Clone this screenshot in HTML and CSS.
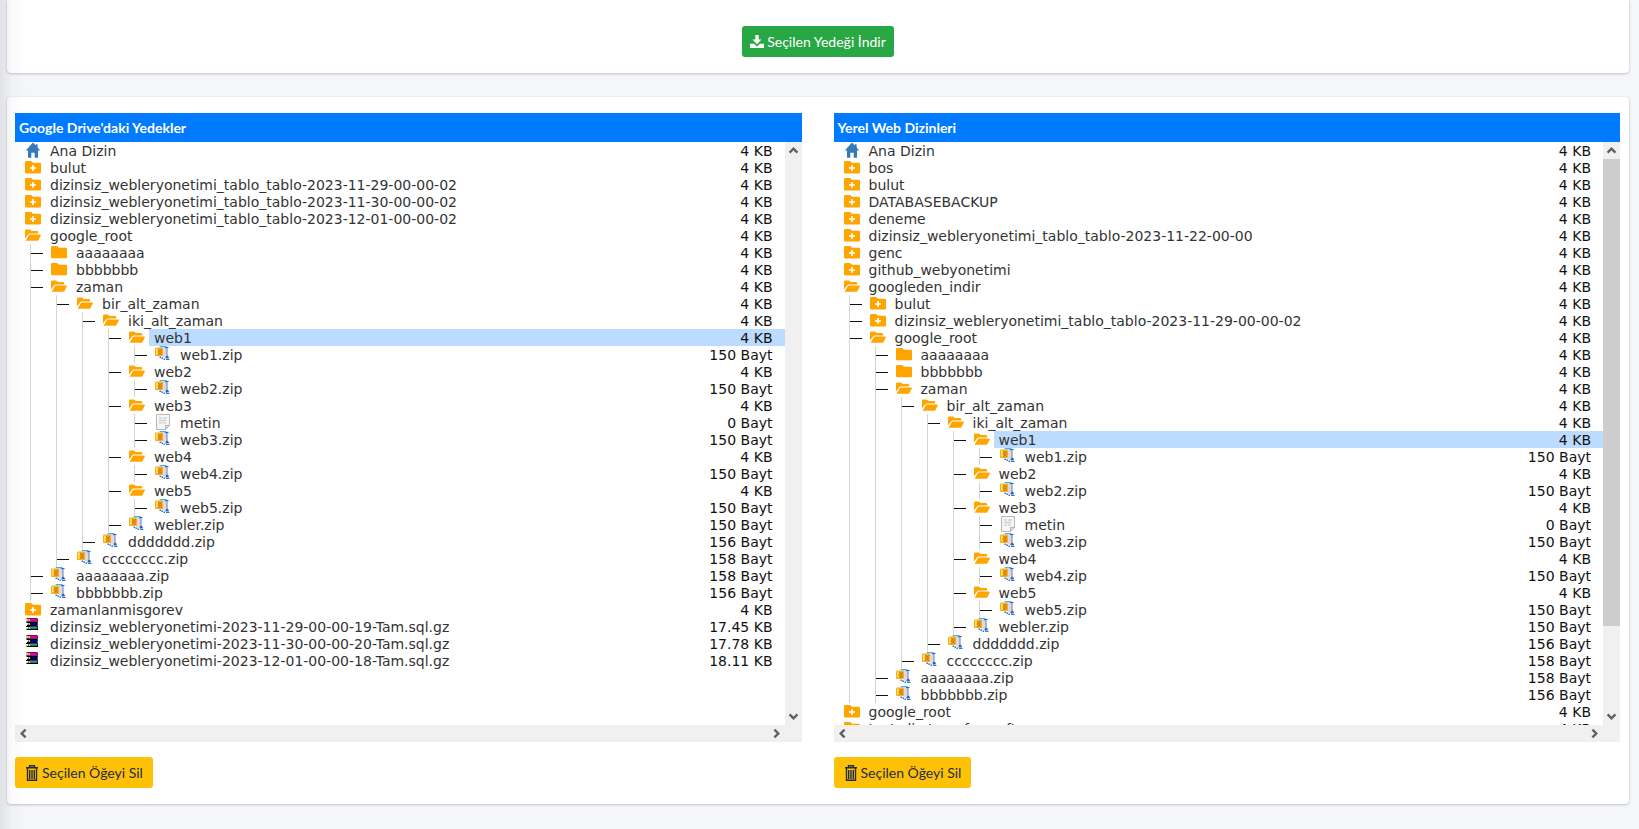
FILE: index.html
```html
<!DOCTYPE html>
<html lang="tr">
<head>
<meta charset="utf-8">
<title>Yedekler</title>
<link rel="stylesheet" href="styles.css">
</head>
<body>
<svg class="sprite" aria-hidden="true">
  <symbol id="home" viewBox="0 0 16 16"><path fill="#337ab7" d="M8 0.5 0.8 8.6H3V15.8H6.3V10.8H9.7V15.8H13V8.6H15.2L12.6 5.6V2.3H10.8V3.5Z"/></symbol>
  <symbol id="plus" viewBox="0 0 16 16"><path fill="#ffa500" d="M1.2 2H6.2L8 3.8H14.8Q16 3.8 16 5V13.3Q16 14.5 14.8 14.5H1.2Q0 14.5 0 13.3V3.2Q0 2 1.2 2Z"/><path fill="#fff" d="M7.2 6H8.8V8.2H11V9.8H8.8V12H7.2V9.8H5V8.2H7.2Z"/></symbol>
  <symbol id="closed" viewBox="0 0 16 16"><path fill="#ffa500" d="M1.2 2H6.2L8 3.8H14.8Q16 3.8 16 5V13.3Q16 14.3 14.8 14.3H1.2Q0 14.3 0 13.3V3.2Q0 2 1.2 2Z"/></symbol>
  <symbol id="open" viewBox="0 0 16 16"><path fill="#ffa500" d="M0 11.5V3.7Q0 2.5 1.2 2.5H5L6.8 4.1H12Q13.2 4.1 13.2 5.3V6.5H5Q3.6 6.5 2.9 7.7ZM.6 13.8 3.8 8.2Q4.1 7.5 5 7.5H15.2Q16.2 7.5 15.8 8.5L13.5 12.9Q13 13.8 12 13.8Z"/></symbol>
  <symbol id="zip" viewBox="0 0 16 16"><path fill="#3db4e8" d="M4 1.3 5.2 0H11.8L11 1.5Z"/><path fill="#e9d5d2" d="M7.5 2H11V10L9.5 11.5H7.5Z"/><path fill="#2864c0" d="M10.2 1H13.5V2H12.4V9.5L13.8 11V12.5L10.5 12.4V11L11.2 10V2.2H10.2Z"/><path fill="#a9c8ec" d="M11.3 2H12V10H11.3Z"/><rect y="1.5" width="8" height="8.6" rx="1.2" fill="#f9ae20"/><path fill="#ffe04a" d="M1 2.5H3V8.5H1Z"/><path fill="none" stroke="#b8681a" stroke-width=".9" d="M3 3.5 5 4.5 7 3.5M2.5 6H7M3 8.5 5 7.5 7 8.5"/><path fill="#3579cf" d="M4.5 10.4H6V11.5H8V13H6.5V12H4.5ZM8.5 12.5H10V14H8.5ZM11 13H14.5V14H11Z"/></symbol>
  <symbol id="text" viewBox="0 0 16 16"><path fill="#f6f6f6" stroke="#b8b8b8" d="M1.5 .5H14.5V11L10.5 15.5H1.5Z"/><path fill="#ddd" stroke="#aaa" stroke-width=".8" d="M10.5 15.3V11.5H14.3Z"/><path stroke="#d0d2d6" stroke-width="1.4" d="M4 4H7M8 4H12M4 6.5H11M4 9H7M8 9H11"/></symbol>
  <symbol id="rar" viewBox="0 0 16 16"><path fill="#8b0038" d="M2 0H12.5V1H13V3.5H2L1 2.5V1Z"/><path fill="#f0e" d="M3 1.2H12V2.6H3Z"/><path d="M1 3.5H13V4.4H1ZM2 4.4H12.5V8H2ZM1 8H13V12H2L1 11Z"/><path fill="#000090" d="M4 5H12.5V7.2H4Z"/><path fill="#fff" d="M1 1.2H3.5V2.8H1ZM1 5H3.5V6.8H1ZM1 9H3.5V10.7H1ZM5 8.8H12.5V9.6H5Z"/><path fill="#078a70" d="M5 9.6H12V11H5Z"/><path fill="#dfdc18" d="M4 1H5V3H4ZM4 5H5V7H4ZM4 9H5V11H4Z"/></symbol>
  <symbol id="trash" viewBox="0 0 14 16"><path fill="none" stroke="currentColor" stroke-width="1.4" d="M4.5 2.5V.8H9.5V2.5M1 2.8H13M2.5 3V15.3H11.5V3M4.7 5V14M7 5V14M9.3 5V14"/></symbol>
  <symbol id="down" viewBox="0 0 14 14"><path fill="currentColor" d="M5.3 0H8.7V4.5H11.5L7 9.3 2.5 4.5H5.3ZM0 8.8H4L7 11.4 10 8.8H14V13H0Z"/></symbol>
  <symbol id="chevron" viewBox="0 0 17 17"><path fill="none" stroke="#606060" stroke-width="2.4" d="M4.6 10.6 8.5 6.7 12.4 10.6"/></symbol>
</svg>
<main class="page">
  <section class="card card-download">
    <button class="btn btn-success" type="button"><svg class="btn-icon"><use href="#down"/></svg>Seçilen Yedeği İndir</button>
  </section>
  <section class="card card-trees">
    <div class="panel">
      <h2 class="title">Google Drive'daki Yedekler</h2>
      <div class="scroller">
        <div class="view">
<ul class="tree">
<li><div class="row"><svg><use href="#home"/></svg><a href="#" class="item">Ana Dizin<span>4 KB</span></a></div></li>
<li><div class="row"><svg><use href="#plus"/></svg><a href="#" class="item">bulut<span>4 KB</span></a></div></li>
<li><div class="row"><svg><use href="#plus"/></svg><a href="#" class="item">dizinsiz_webleryonetimi_tablo_tablo-2023-11-29-00-00-02<span>4 KB</span></a></div></li>
<li><div class="row"><svg><use href="#plus"/></svg><a href="#" class="item">dizinsiz_webleryonetimi_tablo_tablo-2023-11-30-00-00-02<span>4 KB</span></a></div></li>
<li><div class="row"><svg><use href="#plus"/></svg><a href="#" class="item">dizinsiz_webleryonetimi_tablo_tablo-2023-12-01-00-00-02<span>4 KB</span></a></div></li>
<li><div class="row"><svg><use href="#open"/></svg><a href="#" class="item">google_root<span>4 KB</span></a></div>
<ul>
<li><div class="row"><svg><use href="#closed"/></svg><a href="#" class="item">aaaaaaaa<span>4 KB</span></a></div></li>
<li><div class="row"><svg><use href="#closed"/></svg><a href="#" class="item">bbbbbbb<span>4 KB</span></a></div></li>
<li><div class="row"><svg><use href="#open"/></svg><a href="#" class="item">zaman<span>4 KB</span></a></div>
<ul>
<li><div class="row"><svg><use href="#open"/></svg><a href="#" class="item">bir_alt_zaman<span>4 KB</span></a></div>
<ul>
<li><div class="row"><svg><use href="#open"/></svg><a href="#" class="item">iki_alt_zaman<span>4 KB</span></a></div>
<ul>
<li><div class="row"><svg><use href="#open"/></svg><a href="#" class="item selected">web1<span>4 KB</span></a></div>
<ul><li><div class="row"><svg><use href="#zip"/></svg><a href="#" class="item">web1.zip<span>150 Bayt</span></a></div></li></ul></li>
<li><div class="row"><svg><use href="#open"/></svg><a href="#" class="item">web2<span>4 KB</span></a></div>
<ul><li><div class="row"><svg><use href="#zip"/></svg><a href="#" class="item">web2.zip<span>150 Bayt</span></a></div></li></ul></li>
<li><div class="row"><svg><use href="#open"/></svg><a href="#" class="item">web3<span>4 KB</span></a></div>
<ul><li><div class="row"><svg><use href="#text"/></svg><a href="#" class="item">metin<span>0 Bayt</span></a></div></li>
<li><div class="row"><svg><use href="#zip"/></svg><a href="#" class="item">web3.zip<span>150 Bayt</span></a></div></li></ul></li>
<li><div class="row"><svg><use href="#open"/></svg><a href="#" class="item">web4<span>4 KB</span></a></div>
<ul><li><div class="row"><svg><use href="#zip"/></svg><a href="#" class="item">web4.zip<span>150 Bayt</span></a></div></li></ul></li>
<li><div class="row"><svg><use href="#open"/></svg><a href="#" class="item">web5<span>4 KB</span></a></div>
<ul><li><div class="row"><svg><use href="#zip"/></svg><a href="#" class="item">web5.zip<span>150 Bayt</span></a></div></li></ul></li>
<li><div class="row"><svg><use href="#zip"/></svg><a href="#" class="item">webler.zip<span>150 Bayt</span></a></div></li>
</ul></li>
<li><div class="row"><svg><use href="#zip"/></svg><a href="#" class="item">ddddddd.zip<span>156 Bayt</span></a></div></li>
</ul></li>
<li><div class="row"><svg><use href="#zip"/></svg><a href="#" class="item">cccccccc.zip<span>158 Bayt</span></a></div></li>
</ul></li>
<li><div class="row"><svg><use href="#zip"/></svg><a href="#" class="item">aaaaaaaa.zip<span>158 Bayt</span></a></div></li>
<li><div class="row"><svg><use href="#zip"/></svg><a href="#" class="item">bbbbbbb.zip<span>156 Bayt</span></a></div></li>
</ul></li>
<li><div class="row"><svg><use href="#plus"/></svg><a href="#" class="item">zamanlanmisgorev<span>4 KB</span></a></div></li>
<li><div class="row"><svg><use href="#rar"/></svg><a href="#" class="item">dizinsiz_webleryonetimi-2023-11-29-00-00-19-Tam.sql.gz<span>17.45 KB</span></a></div></li>
<li><div class="row"><svg><use href="#rar"/></svg><a href="#" class="item">dizinsiz_webleryonetimi-2023-11-30-00-00-20-Tam.sql.gz<span>17.78 KB</span></a></div></li>
<li><div class="row"><svg><use href="#rar"/></svg><a href="#" class="item">dizinsiz_webleryonetimi-2023-12-01-00-00-18-Tam.sql.gz<span>18.11 KB</span></a></div></li>
</ul>
        </div>
        <div class="bar bar-v">
          <button class="arrow" type="button" aria-label="Yukarı"><svg><use href="#chevron"/></svg></button>
          <div class="track"></div>
          <button class="arrow arrow-down" type="button" aria-label="Aşağı"><svg><use href="#chevron"/></svg></button>
        </div>
        <div class="bar bar-h">
          <button class="arrow arrow-left" type="button" aria-label="Sol"><svg><use href="#chevron"/></svg></button>
          <div class="track"></div>
          <button class="arrow arrow-right" type="button" aria-label="Sağ"><svg><use href="#chevron"/></svg></button>
        </div>
        <div class="bar"></div>
      </div>
      <button class="btn btn-warning" type="button"><svg class="btn-icon"><use href="#trash"/></svg>Seçilen Öğeyi Sil</button>
    </div>
    <div class="panel">
      <h2 class="title">Yerel Web Dizinleri</h2>
      <div class="scroller">
        <div class="view">
<ul class="tree">
<li><div class="row"><svg><use href="#home"/></svg><a href="#" class="item">Ana Dizin<span>4 KB</span></a></div></li>
<li><div class="row"><svg><use href="#plus"/></svg><a href="#" class="item">bos<span>4 KB</span></a></div></li>
<li><div class="row"><svg><use href="#plus"/></svg><a href="#" class="item">bulut<span>4 KB</span></a></div></li>
<li><div class="row"><svg><use href="#plus"/></svg><a href="#" class="item">DATABASEBACKUP<span>4 KB</span></a></div></li>
<li><div class="row"><svg><use href="#plus"/></svg><a href="#" class="item">deneme<span>4 KB</span></a></div></li>
<li><div class="row"><svg><use href="#plus"/></svg><a href="#" class="item">dizinsiz_webleryonetimi_tablo_tablo-2023-11-22-00-00<span>4 KB</span></a></div></li>
<li><div class="row"><svg><use href="#plus"/></svg><a href="#" class="item">genc<span>4 KB</span></a></div></li>
<li><div class="row"><svg><use href="#plus"/></svg><a href="#" class="item">github_webyonetimi<span>4 KB</span></a></div></li>
<li><div class="row"><svg><use href="#open"/></svg><a href="#" class="item">googleden_indir<span>4 KB</span></a></div>
<ul>
<li><div class="row"><svg><use href="#plus"/></svg><a href="#" class="item">bulut<span>4 KB</span></a></div></li>
<li><div class="row"><svg><use href="#plus"/></svg><a href="#" class="item">dizinsiz_webleryonetimi_tablo_tablo-2023-11-29-00-00-02<span>4 KB</span></a></div></li>
<li><div class="row"><svg><use href="#open"/></svg><a href="#" class="item">google_root<span>4 KB</span></a></div>
<ul>
<li><div class="row"><svg><use href="#closed"/></svg><a href="#" class="item">aaaaaaaa<span>4 KB</span></a></div></li>
<li><div class="row"><svg><use href="#closed"/></svg><a href="#" class="item">bbbbbbb<span>4 KB</span></a></div></li>
<li><div class="row"><svg><use href="#open"/></svg><a href="#" class="item">zaman<span>4 KB</span></a></div>
<ul>
<li><div class="row"><svg><use href="#open"/></svg><a href="#" class="item">bir_alt_zaman<span>4 KB</span></a></div>
<ul>
<li><div class="row"><svg><use href="#open"/></svg><a href="#" class="item">iki_alt_zaman<span>4 KB</span></a></div>
<ul>
<li><div class="row"><svg><use href="#open"/></svg><a href="#" class="item selected">web1<span>4 KB</span></a></div>
<ul><li><div class="row"><svg><use href="#zip"/></svg><a href="#" class="item">web1.zip<span>150 Bayt</span></a></div></li></ul></li>
<li><div class="row"><svg><use href="#open"/></svg><a href="#" class="item">web2<span>4 KB</span></a></div>
<ul><li><div class="row"><svg><use href="#zip"/></svg><a href="#" class="item">web2.zip<span>150 Bayt</span></a></div></li></ul></li>
<li><div class="row"><svg><use href="#open"/></svg><a href="#" class="item">web3<span>4 KB</span></a></div>
<ul><li><div class="row"><svg><use href="#text"/></svg><a href="#" class="item">metin<span>0 Bayt</span></a></div></li>
<li><div class="row"><svg><use href="#zip"/></svg><a href="#" class="item">web3.zip<span>150 Bayt</span></a></div></li></ul></li>
<li><div class="row"><svg><use href="#open"/></svg><a href="#" class="item">web4<span>4 KB</span></a></div>
<ul><li><div class="row"><svg><use href="#zip"/></svg><a href="#" class="item">web4.zip<span>150 Bayt</span></a></div></li></ul></li>
<li><div class="row"><svg><use href="#open"/></svg><a href="#" class="item">web5<span>4 KB</span></a></div>
<ul><li><div class="row"><svg><use href="#zip"/></svg><a href="#" class="item">web5.zip<span>150 Bayt</span></a></div></li></ul></li>
<li><div class="row"><svg><use href="#zip"/></svg><a href="#" class="item">webler.zip<span>150 Bayt</span></a></div></li>
</ul></li>
<li><div class="row"><svg><use href="#zip"/></svg><a href="#" class="item">ddddddd.zip<span>156 Bayt</span></a></div></li>
</ul></li>
<li><div class="row"><svg><use href="#zip"/></svg><a href="#" class="item">cccccccc.zip<span>158 Bayt</span></a></div></li>
</ul></li>
<li><div class="row"><svg><use href="#zip"/></svg><a href="#" class="item">aaaaaaaa.zip<span>158 Bayt</span></a></div></li>
<li><div class="row"><svg><use href="#zip"/></svg><a href="#" class="item">bbbbbbb.zip<span>156 Bayt</span></a></div></li>
</ul></li>
</ul></li>
<li><div class="row"><svg><use href="#plus"/></svg><a href="#" class="item">google_root<span>4 KB</span></a></div></li>
<li><div class="row"><svg><use href="#plus"/></svg><a href="#" class="item">test_dir_transfer_soft<span>4 KB</span></a></div></li>
</ul>
        </div>
        <div class="bar bar-v">
          <button class="arrow" type="button" aria-label="Yukarı"><svg><use href="#chevron"/></svg></button>
          <div class="track"><div class="thumb"></div></div>
          <button class="arrow arrow-down" type="button" aria-label="Aşağı"><svg><use href="#chevron"/></svg></button>
        </div>
        <div class="bar bar-h">
          <button class="arrow arrow-left" type="button" aria-label="Sol"><svg><use href="#chevron"/></svg></button>
          <div class="track"></div>
          <button class="arrow arrow-right" type="button" aria-label="Sağ"><svg><use href="#chevron"/></svg></button>
        </div>
        <div class="bar"></div>
      </div>
      <button class="btn btn-warning" type="button"><svg class="btn-icon"><use href="#trash"/></svg>Seçilen Öğeyi Sil</button>
    </div>
  </section>
</main>
</body>
</html>
```

FILE: styles.css
```css
* { box-sizing: border-box; }

body {
  margin: 0;
  background: #f4f6f9;
  color: #212529;
  font-family: Lato, "Noto Sans", sans-serif;
  font-size: 14px;
}

/* shade cast by the side menu */
body::after {
  content: "";
  position: fixed;
  inset: 0 auto 0 0;
  width: 26px;
  background: linear-gradient(to right, rgba(0, 0, 0, .08), rgba(0, 0, 0, .02) 45%, transparent);
  pointer-events: none;
}

.sprite { position: absolute; width: 0; height: 0; }

.page {
  display: flex;
  flex-direction: column;
  gap: 24px;
  padding: 0 10px 24px 7px;
}

.card {
  background: #fff;
  border-radius: 4px;
  box-shadow: 0 0 1px rgba(0, 0, 0, .125), 0 1px 3px rgba(0, 0, 0, .2);
}

.card-download {
  display: flex;
  justify-content: center;
  padding: 26px 8px 16px;
  border-radius: 0 0 4px 4px;
}

.card-trees {
  display: grid;
  grid-template-columns: 1fr 1fr;
  gap: 32px;
  padding: 16px 9px 16px 8px;
}

.panel { min-width: 0; }

.title {
  margin: 0;
  padding: 0 4px;
  background: #007bff;
  color: #fff;
  font-size: 14px;
  font-weight: 700;
  line-height: 29px;
}

.scroller {
  display: grid;
  grid-template-columns: 1fr 17px;
  grid-template-rows: 583px 17px;
  margin-bottom: 15px;
}

.view {
  overflow: hidden;
  font-family: Verdana, "DejaVu Sans", sans-serif;
  font-size: 14px;
}

.tree, .tree ul {
  margin: 0;
  padding: 0;
  list-style: none;
}
.tree { padding-left: 10px; }
.tree ul {
  margin-left: 5px;
  padding-left: 20px;
  border-left: 1px solid #d3d3d3;
}

.row {
  display: flex;
  align-items: flex-start;
  gap: 4px;
  height: 17px;
}
.row svg { flex: none; width: 16px; height: 16px; }
.tree ul .row::before {
  content: "";
  width: 12px;
  height: 1px;
  margin: 9px 4px 0 -20px;
  background: #111;
}

.item {
  display: flex;
  flex: 1;
  justify-content: space-between;
  height: 17px;
  padding: 0 12px 0 5px;
  color: #333;
  line-height: 19px;
  text-decoration: none;
  white-space: nowrap;
}
.item span { color: #111; }
.selected { background: #bbdcff; }

.bar { display: flex; background: #f0f0f0; }
.bar-v { flex-direction: column; }
.track { flex: 1; }
.thumb { height: 85%; background: #cdcdcd; }

.arrow {
  width: 17px;
  height: 17px;
  padding: 0;
  border: 0;
  background: none;
}
.arrow svg { display: block; width: 17px; height: 17px; }
.arrow-down { transform: rotate(180deg); }
.arrow-left { transform: rotate(-90deg); }
.arrow-right { transform: rotate(90deg); }

.btn {
  display: inline-flex;
  align-items: center;
  gap: 3px;
  height: 31px;
  padding: 0 8px;
  border: 0;
  border-radius: 3px;
  font: inherit;
}
.btn-icon { width: 14px; height: 16px; }
.btn-success { background: #28a745; color: #fff; }
.btn-warning { padding: 0 10px; background: #ffc107; color: #1f2d3d; }
```
